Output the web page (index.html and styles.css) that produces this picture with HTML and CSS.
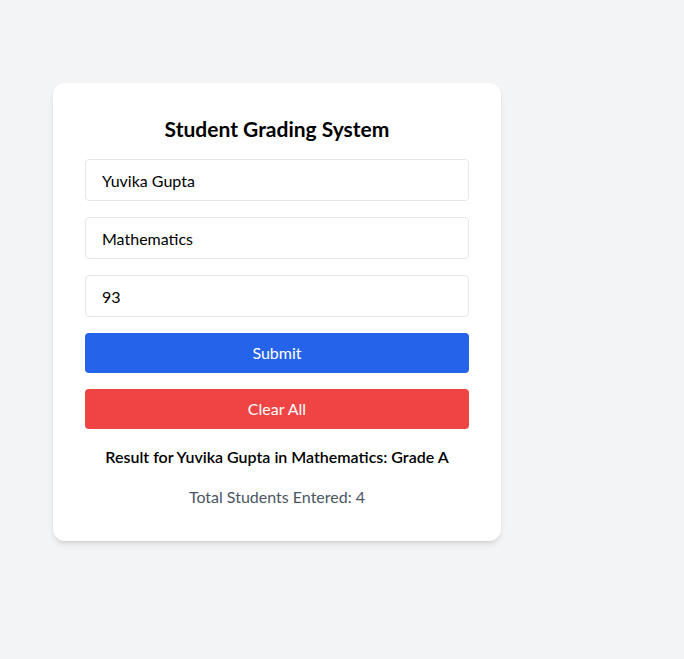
FILE: index.html
```html
<!DOCTYPE html>
<html>
<head>
<meta charset="utf-8">
<link rel="stylesheet" href="styles.css">
</head>
<body>
<div class="page">
  <div class="card">
    <h1 class="title">Student Grading System</h1>
    <input class="field" type="text" value="Yuvika Gupta">
    <input class="field" type="text" value="Mathematics">
    <input class="field" type="text" value="93">
    <button class="btn btn-blue">Submit</button>
    <button class="btn btn-red">Clear All</button>
    <p class="result">Result for Yuvika Gupta in Mathematics: Grade A</p>
    <p class="total">Total Students Entered: 4</p>
  </div>
</div>
</body>
</html>
```

FILE: styles.css
```css
* { box-sizing: border-box; }
html, body { margin: 0; padding: 0; }
body {
  background: #f3f4f6;
  font-family: "Lato", "Noto Sans", sans-serif;
  color: #000;
  min-height: 659px;
}
.page {
  padding: 83px 0 0 53px;
}
.card {
  width: 448px;
  background: #fff;
  border-radius: 12px;
  padding: 32px;
  box-shadow: 0 4px 6px -1px rgba(0,0,0,0.1), 0 2px 4px -2px rgba(0,0,0,0.1);
  display: flex;
  flex-direction: column;
}
.title {
  margin: 0 0 16px;
  font-size: 21px;
  line-height: 28px;
  font-weight: 700;
  text-align: center;
}
.field {
  display: block;
  width: 100%;
  height: 42px;
  margin: 0 0 16px;
  padding: 8px 16px;
  border: 1px solid #e5e7eb;
  border-radius: 4px;
  font-family: inherit;
  font-size: 16px;
  line-height: 24px;
  color: #000;
  background: #fff;
  outline: none;
}
.btn {
  display: block;
  width: 100%;
  height: 40px;
  margin: 0 0 16px;
  padding: 8px 0;
  border: none;
  border-radius: 4px;
  color: #fff;
  font-family: inherit;
  font-size: 16px;
  line-height: 24px;
  text-align: center;
}
.btn-blue { background: #2563eb; }
.btn-red { background: #ef4444; margin-bottom: 0; }
.result {
  margin: 16px 0 0;
  font-size: 16px;
  line-height: 24px;
  font-weight: 600;
  text-align: center;
}
.total {
  margin: 16px 0 0;
  font-size: 16px;
  line-height: 24px;
  color: #4b5563;
  text-align: center;
}
```
